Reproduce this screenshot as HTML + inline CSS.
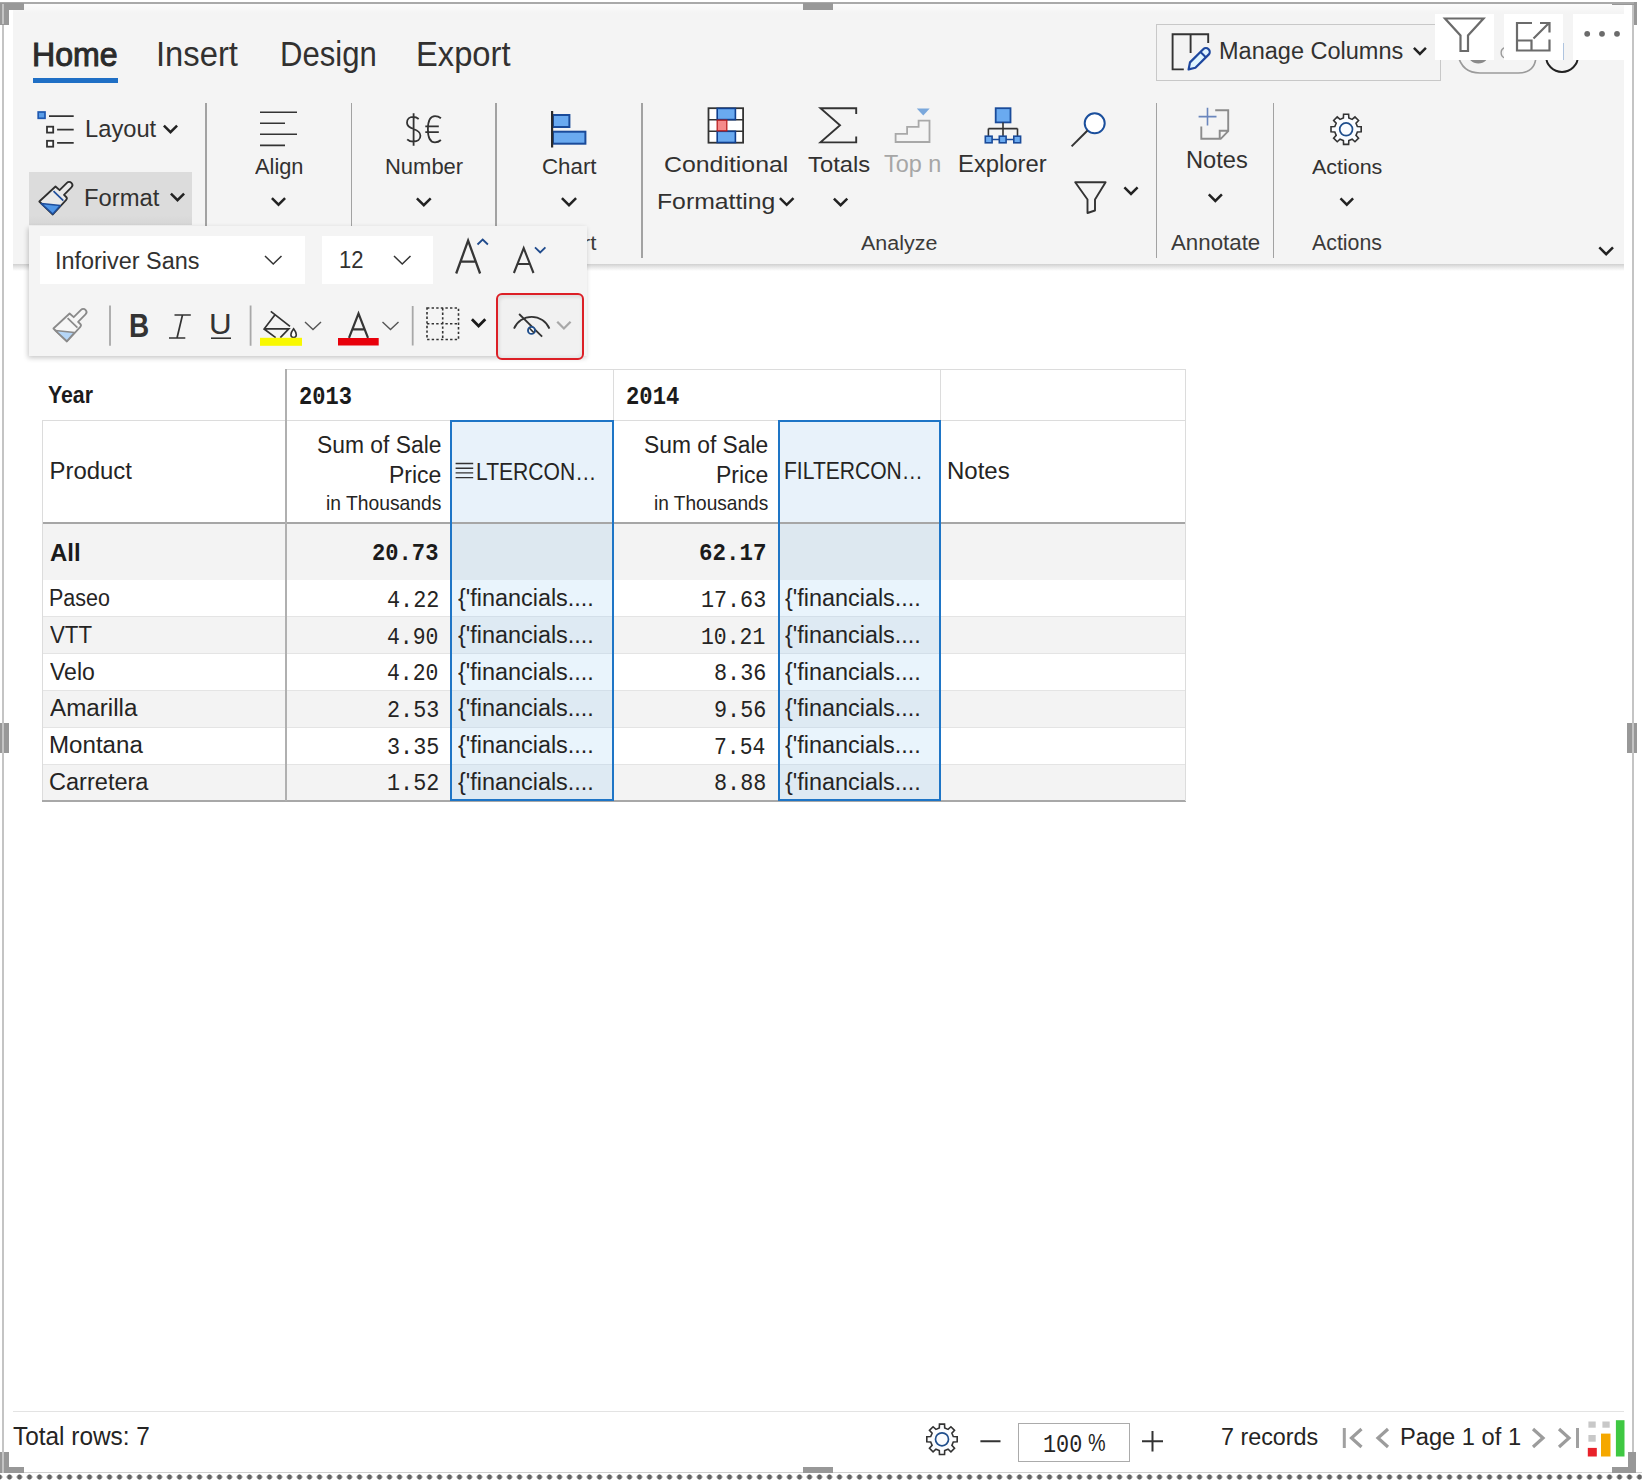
<!DOCTYPE html>
<html><head><meta charset="utf-8"><style>
html,body{margin:0;padding:0;background:#fff;}
body{width:1642px;height:1482px;overflow:hidden;position:relative;font-family:"Liberation Sans",sans-serif;}
.t{position:absolute;white-space:nowrap;line-height:1;transform-origin:0 0;z-index:3;}
.r{position:absolute;z-index:1;}
svg{position:absolute;overflow:visible;}
</style></head><body>
<div class="r" style="left:13px;top:4px;width:1611px;height:260px;background:linear-gradient(#fbfbfb 0px,#f4f4f4 9px,#f4f4f4 100%);"></div>
<div class="r" style="left:13px;top:264px;width:1611px;height:7px;background:linear-gradient(#d0d0d0 0px,#e6e6e6 3px,rgba(255,255,255,0) 7px);"></div>
<div class="r" style="left:33px;top:78px;width:85px;height:5px;background:#1f6fc5;"></div>
<div class="r" style="left:29px;top:172px;width:163px;height:53px;background:linear-gradient(#dcdcdc 0px,#dcdcdc 43px,#d6d6d6 53px);"></div>
<div class="r" style="left:205.3px;top:103px;width:1.6px;height:155px;background:#a2a2a2;"></div>
<div class="r" style="left:350.6px;top:103px;width:1.6px;height:155px;background:#a2a2a2;"></div>
<div class="r" style="left:495.4px;top:103px;width:1.6px;height:155px;background:#a2a2a2;"></div>
<div class="r" style="left:641px;top:103px;width:1.6px;height:155px;background:#a2a2a2;"></div>
<div class="r" style="left:1155.5px;top:103px;width:1.6px;height:155px;background:#a2a2a2;"></div>
<div class="r" style="left:1272.9px;top:103px;width:1.6px;height:155px;background:#a2a2a2;"></div>
<div class="r" style="left:1156px;top:23.5px;width:285px;height:57px;background:#f3f3f3;border:1px solid #c8c8c8;box-sizing:border-box;"></div>
<div class="r" style="left:1435px;top:13.5px;width:59px;height:46.5px;background:#fff;z-index:4;"></div>
<div class="r" style="left:1503.8px;top:13.5px;width:59px;height:46.5px;background:#fff;z-index:4;"></div>
<div class="r" style="left:1572.8px;top:13.5px;width:51px;height:46.5px;background:#fff;z-index:4;"></div>
<div class="r" style="left:29px;top:225.5px;width:558px;height:130.5px;background:#f4f4f4;z-index:10;box-shadow:-1px 2px 5px rgba(0,0,0,0.22);"></div>
<div class="r" style="left:40px;top:236px;width:265px;height:48.3px;background:#fff;z-index:11;"></div>
<div class="r" style="left:321.7px;top:236px;width:111.8px;height:48.3px;background:#fff;z-index:11;"></div>
<div class="r" style="left:495.5px;top:292.6px;width:88px;height:67px;background:#f1f1f1;z-index:11;border:2.2px solid #dc1f26;border-radius:6px;box-sizing:border-box;box-shadow:inset 3px 4px 3px -1px rgba(0,0,0,0.07), inset -2px -3px 3px -1px rgba(0,0,0,0.05);"></div>
<div class="r" style="left:42px;top:523px;width:1143.5px;height:57px;background:#f3f3f3;"></div>
<div class="r" style="left:42px;top:580.2px;width:1143.5px;height:36.19999999999993px;background:#ffffff;"></div>
<div class="r" style="left:42px;top:616.4px;width:1143.5px;height:36.80000000000007px;background:#f3f3f3;"></div>
<div class="r" style="left:42px;top:615.9px;width:1143.5px;height:1px;background:#e4e4e4;"></div>
<div class="r" style="left:42px;top:653.2px;width:1143.5px;height:36.799999999999955px;background:#ffffff;"></div>
<div class="r" style="left:42px;top:652.7px;width:1143.5px;height:1px;background:#e4e4e4;"></div>
<div class="r" style="left:42px;top:690.0px;width:1143.5px;height:37.0px;background:#f3f3f3;"></div>
<div class="r" style="left:42px;top:689.5px;width:1143.5px;height:1px;background:#e4e4e4;"></div>
<div class="r" style="left:42px;top:727.0px;width:1143.5px;height:37.0px;background:#ffffff;"></div>
<div class="r" style="left:42px;top:726.5px;width:1143.5px;height:1px;background:#e4e4e4;"></div>
<div class="r" style="left:42px;top:764.0px;width:1143.5px;height:36.39999999999998px;background:#f3f3f3;"></div>
<div class="r" style="left:42px;top:763.5px;width:1143.5px;height:1px;background:#e4e4e4;"></div>
<div class="r" style="left:450.3px;top:421px;width:162.5px;height:101.5px;background:#e8f2fa;"></div>
<div class="r" style="left:450.3px;top:523px;width:162.5px;height:57.2px;background:#dde8f0;"></div>
<div class="r" style="left:450.3px;top:580.2px;width:162.5px;height:36.19999999999993px;background:#e9f4fc;"></div>
<div class="r" style="left:450.3px;top:616.4px;width:162.5px;height:36.80000000000007px;background:#deeaf3;"></div>
<div class="r" style="left:450.3px;top:615.9px;width:162.5px;height:1px;background:#d3dfe9;"></div>
<div class="r" style="left:450.3px;top:653.2px;width:162.5px;height:36.799999999999955px;background:#e9f4fc;"></div>
<div class="r" style="left:450.3px;top:652.7px;width:162.5px;height:1px;background:#d3dfe9;"></div>
<div class="r" style="left:450.3px;top:690.0px;width:162.5px;height:37.0px;background:#deeaf3;"></div>
<div class="r" style="left:450.3px;top:689.5px;width:162.5px;height:1px;background:#d3dfe9;"></div>
<div class="r" style="left:450.3px;top:727.0px;width:162.5px;height:37.0px;background:#e9f4fc;"></div>
<div class="r" style="left:450.3px;top:726.5px;width:162.5px;height:1px;background:#d3dfe9;"></div>
<div class="r" style="left:450.3px;top:764.0px;width:162.5px;height:36.39999999999998px;background:#deeaf3;"></div>
<div class="r" style="left:450.3px;top:763.5px;width:162.5px;height:1px;background:#d3dfe9;"></div>
<div class="r" style="left:777.6px;top:421px;width:162.5px;height:101.5px;background:#e8f2fa;"></div>
<div class="r" style="left:777.6px;top:523px;width:162.5px;height:57.2px;background:#dde8f0;"></div>
<div class="r" style="left:777.6px;top:580.2px;width:162.5px;height:36.19999999999993px;background:#e9f4fc;"></div>
<div class="r" style="left:777.6px;top:616.4px;width:162.5px;height:36.80000000000007px;background:#deeaf3;"></div>
<div class="r" style="left:777.6px;top:615.9px;width:162.5px;height:1px;background:#d3dfe9;"></div>
<div class="r" style="left:777.6px;top:653.2px;width:162.5px;height:36.799999999999955px;background:#e9f4fc;"></div>
<div class="r" style="left:777.6px;top:652.7px;width:162.5px;height:1px;background:#d3dfe9;"></div>
<div class="r" style="left:777.6px;top:690.0px;width:162.5px;height:37.0px;background:#deeaf3;"></div>
<div class="r" style="left:777.6px;top:689.5px;width:162.5px;height:1px;background:#d3dfe9;"></div>
<div class="r" style="left:777.6px;top:727.0px;width:162.5px;height:37.0px;background:#e9f4fc;"></div>
<div class="r" style="left:777.6px;top:726.5px;width:162.5px;height:1px;background:#d3dfe9;"></div>
<div class="r" style="left:777.6px;top:764.0px;width:162.5px;height:36.39999999999998px;background:#deeaf3;"></div>
<div class="r" style="left:777.6px;top:763.5px;width:162.5px;height:1px;background:#d3dfe9;"></div>
<div class="r" style="left:286px;top:368.5px;width:899.5px;height:1px;background:#dcdcdc;"></div>
<div class="r" style="left:42px;top:420px;width:1143.5px;height:1px;background:#dcdcdc;"></div>
<div class="r" style="left:42px;top:521.5px;width:1143.5px;height:2px;background:#a6a6a6;"></div>
<div class="r" style="left:42px;top:799.5px;width:1143.5px;height:2px;background:#a8a8a8;"></div>
<div class="r" style="left:41.5px;top:421px;width:1px;height:379px;background:#dcdcdc;"></div>
<div class="r" style="left:1185px;top:368.5px;width:1px;height:432px;background:#dcdcdc;"></div>
<div class="r" style="left:285.2px;top:368.5px;width:1.4px;height:432px;background:#b0b0b0;"></div>
<div class="r" style="left:612.5px;top:368.5px;width:1px;height:52px;background:#dcdcdc;"></div>
<div class="r" style="left:939.8px;top:368.5px;width:1px;height:52px;background:#dcdcdc;"></div>
<div class="r" style="left:450.3px;top:420.2px;width:163.5px;height:381.0px;background:transparent;border:2px solid #1e75c6;box-sizing:border-box;height:381px;"></div>
<div class="r" style="left:777.6px;top:420.2px;width:163.5px;height:381.0px;background:transparent;border:2px solid #1e75c6;box-sizing:border-box;height:381px;"></div>
<div class="r" style="left:13px;top:1410.5px;width:1611px;height:1.5px;background:#e3e3e3;"></div>
<div class="r" style="left:1018.4px;top:1422.8px;width:111.5px;height:39.7px;background:#fff;border:1.5px solid #ababab;box-sizing:border-box;"></div>
<div class="r" style="left:0px;top:2px;width:1637px;height:2px;background:#a9a9a9;z-index:20;"></div>
<div class="r" style="left:2px;top:4px;width:2px;height:1469px;background:#c4c4c4;z-index:20;"></div>
<div class="r" style="left:1632px;top:4px;width:2px;height:1469px;background:#c4c4c4;z-index:20;"></div>
<div class="r" style="left:0px;top:1472px;width:1642px;height:1px;background:#d0d0d0;z-index:20;"></div>
<div class="r" style="left:0px;top:1473px;width:1642px;height:9px;background:#fff;z-index:20;"></div>
<div class="r" style="left:0;top:1471.5px;width:1642px;height:10px;z-index:21;background:radial-gradient(circle at 5px 5px,#656565 2.3px,rgba(101,101,101,0) 2.9px) 4.5px 0/10px 10px repeat-x;"></div>
<div class="r" style="left:0px;top:3px;width:9px;height:21.5px;background:#989898;z-index:22;"></div>
<div class="r" style="left:0px;top:3px;width:24px;height:6.5px;background:#989898;z-index:22;"></div>
<div class="r" style="left:803px;top:3px;width:30px;height:6.5px;background:#989898;z-index:22;"></div>
<div class="r" style="left:0px;top:723px;width:9px;height:30px;background:#989898;z-index:22;"></div>
<div class="r" style="left:1627px;top:723px;width:10px;height:30px;background:#989898;z-index:22;"></div>
<div class="r" style="left:0px;top:1452px;width:9px;height:21px;background:#989898;z-index:22;"></div>
<div class="r" style="left:0px;top:1467px;width:24px;height:6px;background:#989898;z-index:22;"></div>
<div class="r" style="left:1628px;top:1452px;width:8px;height:21px;background:#989898;z-index:22;"></div>
<div class="r" style="left:1612px;top:1467px;width:24px;height:6px;background:#989898;z-index:22;"></div>
<div class="r" style="left:1634px;top:2px;width:3px;height:22.7px;background:#989898;z-index:22;"></div>
<div class="r" style="left:1612px;top:3.5px;width:22px;height:1.5px;background:#989898;z-index:22;"></div>
<div class="r" style="left:803px;top:1467px;width:30px;height:6px;background:#989898;z-index:22;"></div>
<div class="r" style="left:2px;top:4px;width:2px;height:20px;background:#c4c4c4;z-index:23;"></div>
<div class="r" style="left:2px;top:723px;width:2px;height:30px;background:#c4c4c4;z-index:23;"></div>
<div class="r" style="left:2px;top:1452px;width:2px;height:21px;background:#c4c4c4;z-index:23;"></div>
<div class="r" style="left:1632px;top:723px;width:2px;height:30px;background:#c4c4c4;z-index:23;"></div>
<svg style="left:0;top:0;z-index:3" width="1642" height="1482" viewBox="0 0 1642 1482"><rect x="38.2" y="112" width="6.8" height="6.3" fill="#5b9ee8" stroke="#1f58b0" stroke-width="1.7"/><path d="M49,116.2H73.7M57.1,129.6H73.7M57.1,142.8H73.7" stroke="#333" stroke-width="1.7"/><rect x="47" y="126.7" width="6.2" height="5.9" fill="#fff" stroke="#333" stroke-width="1.8"/><rect x="47" y="140.8" width="6.2" height="5.9" fill="#fff" stroke="#333" stroke-width="1.8"/><path d="M163.90,125.62 L170.50,132.22 L177.10,125.62" fill="none" stroke="#222" stroke-width="2.5" stroke-linejoin="miter"/><g transform="translate(-14.1,-127)"><path d="M53.4,328.5 L69.6,313.5 L73.7,317.2 L81,309.9 A3.1,3.1 0 0 1 85.5,314.4 L78.1,321.8 L80.3,324 A2,2 0 0 1 80.3,326.8 L66.9,341.5 Z" fill="#e9e9e9" stroke="#2f2f2f" stroke-width="1.8" stroke-linejoin="round"/><path d="M55.4,330.6 L74.4,332.6 L66.9,341 Z" fill="#4f95e6" stroke="#1f4e9c" stroke-width="1.5" stroke-linejoin="round"/><path d="M67.6,318.2 L77.4,327.7" stroke="#1f4e9c" stroke-width="1.7"/></g><path d="M170.90,193.62 L177.50,200.22 L184.10,193.62" fill="none" stroke="#222" stroke-width="2.5" stroke-linejoin="miter"/><path d="M260,112.2H297M260,123.2H285M260,134.2H297M260,145.4H285" stroke="#333" stroke-width="1.6"/><path d="M271.90,198.12 L278.50,204.72 L285.10,198.12" fill="none" stroke="#222" stroke-width="2.5" stroke-linejoin="miter"/><path d="M416.90,198.32 L423.80,205.22 L430.70,198.32" fill="none" stroke="#222" stroke-width="2.5" stroke-linejoin="miter"/><rect x="553" y="115" width="16.4" height="12" fill="#6aaaf0" stroke="#1a4b9a" stroke-width="2"/><rect x="553" y="131.7" width="32.4" height="12" fill="#6aaaf0" stroke="#1a4b9a" stroke-width="2"/><path d="M552.1,111V147.5" stroke="#2b2b2b" stroke-width="2.2"/><path d="M561.90,198.12 L569.00,205.22 L576.10,198.12" fill="none" stroke="#222" stroke-width="2.5" stroke-linejoin="miter"/><rect x="708.5" y="108.2" width="34.6" height="34.5" fill="#fff" stroke="#333" stroke-width="1.8"/><path d="M708.5,119.8H743.1M708.5,131.2H743.1" stroke="#333" stroke-width="1.6"/><rect x="717.2" y="108.4" width="18.2" height="11.2" fill="#6aaaf0" stroke="#0f3f8f" stroke-width="1.6"/><rect x="717.2" y="131.3" width="18.2" height="11.2" fill="#6aaaf0" stroke="#0f3f8f" stroke-width="1.6"/><rect x="717.2" y="120.2" width="9.6" height="10.6" fill="#f58a8a" stroke="#b82020" stroke-width="1.3"/><path d="M779.90,198.03 L786.70,204.82 L793.50,198.03" fill="none" stroke="#222" stroke-width="2.5" stroke-linejoin="miter"/><path d="M856.2,114 V108.2 H820.5 L840,125.3 L820.5,142.4 H856.2 V136.5" fill="none" stroke="#333" stroke-width="1.9" stroke-linejoin="miter"/><path d="M833.90,198.52 L840.60,205.22 L847.30,198.52" fill="none" stroke="#222" stroke-width="2.5" stroke-linejoin="miter"/><path d="M916.8,108.4 H929.7 L923.25,115.6 Z" fill="#7aa8dc"/><path d="M895.6,142 V133.9 H907.1 V126.8 H918.6 V120.6 H929.5 V142 Z" fill="none" stroke="#a8a8a8" stroke-width="1.8"/><rect x="995.7" y="108.2" width="14.8" height="14.2" fill="#6aaaf0" stroke="#1a4b9a" stroke-width="1.8"/><path d="M1003,122.4V128.6M988.4,128.6H1017.5M988.4,128.6V136M1003,128.6V136M1017.5,128.6V136" fill="none" stroke="#333" stroke-width="1.6"/><path d="M992,139.5H999M1006,139.5H1013.5" stroke="#1a4b9a" stroke-width="1.6"/><rect x="985.3" y="136.2" width="6.8" height="6.6" fill="#6aaaf0" stroke="#1a4b9a" stroke-width="1.6"/><rect x="999.3" y="136.2" width="6.8" height="6.6" fill="#6aaaf0" stroke="#1a4b9a" stroke-width="1.6"/><rect x="1013.8" y="136.2" width="6.8" height="6.6" fill="#6aaaf0" stroke="#1a4b9a" stroke-width="1.6"/><circle cx="1094.7" cy="123.3" r="10" fill="#fff" stroke="#1b4f9c" stroke-width="2"/><path d="M1087.5,130.5 L1071.6,146.4" stroke="#333" stroke-width="2"/><path d="M1075.2,182.2 H1105.6 L1095,199.5 V210.5 L1087.5,213 V199.5 Z" fill="none" stroke="#333" stroke-width="1.9" stroke-linejoin="round"/><path d="M1124.40,187.32 L1131.00,193.92 L1137.60,187.32" fill="none" stroke="#222" stroke-width="2.5" stroke-linejoin="miter"/><path d="M1207.5,107.7V125.6M1198.6,116.6H1216.5" stroke="#6a86bd" stroke-width="1.6"/><path d="M1215.2,110.2H1228.2V131.1L1220.7,138.8H1201.3V126.4M1219.7,138V130.7H1228.2" fill="none" stroke="#8c8c8c" stroke-width="1.9"/><path d="M1208.80,194.38 L1215.35,200.92 L1221.90,194.38" fill="none" stroke="#222" stroke-width="2.5" stroke-linejoin="miter"/><path d="M1343.39,118.02 L1343.57,114.21 L1348.63,114.21 L1348.81,118.02 L1352.16,119.41 L1354.98,116.84 L1358.56,120.42 L1355.99,123.24 L1357.38,126.59 L1361.19,126.77 L1361.19,131.83 L1357.38,132.01 L1355.99,135.36 L1358.56,138.18 L1354.98,141.76 L1352.16,139.19 L1348.81,140.58 L1348.63,144.39 L1343.57,144.39 L1343.39,140.58 L1340.04,139.19 L1337.22,141.76 L1333.64,138.18 L1336.21,135.36 L1334.82,132.01 L1331.01,131.83 L1331.01,126.77 L1334.82,126.59 L1336.21,123.24 L1333.64,120.42 L1337.22,116.84 L1340.04,119.41Z" fill="#fafcff" stroke="#333" stroke-width="1.6" stroke-linejoin="miter"/><circle cx="1346.1" cy="129.3" r="6.4" fill="none" stroke="#1f4e8c" stroke-width="1.7"/><path d="M1340.50,198.42 L1346.80,204.72 L1353.10,198.42" fill="none" stroke="#222" stroke-width="2.5" stroke-linejoin="miter"/><path d="M1599.30,247.28 L1606.15,254.12 L1613.00,247.28" fill="none" stroke="#222" stroke-width="2.5" stroke-linejoin="miter"/><path d="M1183.8,69.4H1172.6V34.2H1208.2V43M1190.6,34.2V53" fill="none" stroke="#333" stroke-width="1.9"/><path d="M1188.6,69.4 L1190,62.4 L1203.2,49.2 A3.6,3.6 0 0 1 1208.6,54.6 L1195.4,67.8 Z" fill="#dff5ff" stroke="#1d479e" stroke-width="2.2" stroke-linejoin="round"/><path d="M1200.5,52 L1205.8,57.3" stroke="#1d479e" stroke-width="2"/><path d="M1413.90,47.93 L1419.90,53.93 L1425.90,47.93" fill="none" stroke="#222" stroke-width="2.5" stroke-linejoin="miter"/><path d="M413.6,113.2V145.7M418.7,119C417,117.5 415,116.8 413,116.8C409.5,116.8 407,119.3 407,122.7C407,126.2 409.8,127.7 413.6,129C417.5,130.3 420.4,132.2 420.4,135.8C420.4,139.3 417.5,141.6 413.4,141.6C410.8,141.6 408.6,140.7 407.2,139.3M440.9,118.3C439.3,116.9 437.3,116.1 435,116.1C430.8,116.1 427.9,120.4 427.9,129.2C427.9,138 430.8,142.3 435,142.3C437.3,142.3 439.4,141.4 440.9,140M425.3,126.4H438.8M425.3,132.2H438.8" fill="none" stroke="#333" stroke-width="1.8"/></svg>
<svg style="left:0;top:0;z-index:3" width="1642" height="1482" viewBox="0 0 1642 1482"><path d="M1458,55 Q1462,73 1480,73 H1518 Q1536,73 1536,55" fill="none" stroke="#9a9a9a" stroke-width="1.6"/><path d="M1546,56 A16,16 0 0 0 1578,56" fill="none" stroke="#222" stroke-width="2"/><circle cx="1478.3" cy="52.5" r="11" fill="#8a8a8a"/><path d="M1505,47.5 A5.5,5.5 0 0 0 1505,58" fill="none" stroke="#9a9a9a" stroke-width="1.4"/><path d="M1563,43V60" stroke="#4a7fc0" stroke-width="0.8"/></svg>
<svg style="left:0;top:0;z-index:5" width="1642" height="1482" viewBox="0 0 1642 1482"><path d="M1445,18.5 H1483.5 L1468,35.5 V51 H1460.5 V35.5 Z" fill="none" stroke="#6b6b6b" stroke-width="2.2" stroke-linejoin="miter"/><path d="M1532,23 H1517 V50.5 H1549.5 V39.5 M1517,40.5 H1531.5 V50.5 M1533.5,38.5 L1549,23 M1540,23 H1549.5 V32.5" fill="none" stroke="#6b6b6b" stroke-width="2.2"/><circle cx="1587.2" cy="33.8" r="2.9" fill="#6b6b6b"/><circle cx="1602" cy="33.8" r="2.9" fill="#6b6b6b"/><circle cx="1617" cy="33.8" r="2.9" fill="#6b6b6b"/></svg>
<svg style="left:0;top:0;z-index:12" width="1642" height="1482" viewBox="0 0 1642 1482"><path d="M265,256 L273.25,264 L281.5,256" fill="none" stroke="#333" stroke-width="1.5" stroke-linecap="butt" stroke-linejoin="miter"/><path d="M394,256 L402.25,264 L410.5,256" fill="none" stroke="#333" stroke-width="1.5" stroke-linecap="butt" stroke-linejoin="miter"/><path d="M456.2,273.5 L468.1,240.6 L480.1,273.5 M461.2,261.6 H475" fill="none" stroke="#363636" stroke-width="2.3" stroke-linejoin="miter"/><path d="M513.9,273 L523.7,248.2 L533.5,273 M517.6,264 H529.8" fill="none" stroke="#363636" stroke-width="2.1" stroke-linejoin="miter"/><path d="M349,337.8 L358.5,313.5 L368,337.8 M352.3,329.3 H364.7" fill="none" stroke="#363636" stroke-width="2.2" stroke-linejoin="miter"/><path d="M477.5,244.5 L482.7,239.5 L487.9,244.5" fill="none" stroke="#1f4a8c" stroke-width="1.8"/><path d="M535,247.3 L540.2,252.5 L545.4,247.3" fill="none" stroke="#1f4a8c" stroke-width="1.8"/><path d="M53.4,328.5 L69.6,313.5 L73.7,317.2 L81,309.9 A3.1,3.1 0 0 1 85.5,314.4 L78.1,321.8 L80.3,324 A2,2 0 0 1 80.3,326.8 L66.9,341.5 Z" fill="#f6f6f6" stroke="#8a8a8a" stroke-width="1.8" stroke-linejoin="round"/><path d="M55.4,330.6 L74.4,332.6 L66.9,341 Z" fill="#b5d6f7" stroke="#8a8a8a" stroke-width="1.5" stroke-linejoin="round"/><path d="M67.6,318.2 L77.4,327.7" stroke="#8a8a8a" stroke-width="1.7"/><path d="M110,305.5V345.7M250.6,305.5V345.7M412.7,306V345.5" stroke="#a8a8a8" stroke-width="1.8"/><path d="M174.5,315H190.8M169,338H185.3M182.5,315L177,338" stroke="#333" stroke-width="1.7"/><path d="M211,338.2H231" stroke="#333" stroke-width="1.6"/><path d="M270.8,311.4 L290,326.3 M274.8,315 L264.1,329 L275.7,337.6 M264.1,328.8 H288.8 L280.3,337.6" fill="none" stroke="#333" stroke-width="1.7"/><path d="M293.6,328.8 C295.3,331 296.3,333.3 296.3,334.8 A2.7,2.7 0 0 1 290.9,334.8 C290.9,333.3 291.9,331 293.6,328.8Z" fill="#fff" stroke="#333" stroke-width="1.6"/><rect x="260" y="337.8" width="42" height="8" fill="#f8f800"/><path d="M305,322 L313.0,329.5 L321,322" fill="none" stroke="#555" stroke-width="1.4" stroke-linecap="butt" stroke-linejoin="miter"/><rect x="338" y="338" width="40.7" height="7.5" fill="#e8000b"/><path d="M382.5,322 L390.5,329.5 L398.5,322" fill="none" stroke="#555" stroke-width="1.4" stroke-linecap="butt" stroke-linejoin="miter"/><path d="M427,308 H458.5 V339.5 H427 Z M442.7,308 V339.5 M427,323.7 H458.5" fill="none" stroke="#333" stroke-width="1.6" stroke-dasharray="2.4,2.2"/><path d="M471.91,319.32 L478.60,326.01 L485.29,319.32" fill="none" stroke="#1a1a1a" stroke-width="2.8" stroke-linejoin="miter"/><path d="M514,328.6 A19.2,19.2 0 0 1 549.4,328.6" fill="none" stroke="#333" stroke-width="1.8"/><path d="M519.1,314 L542.1,336.7" stroke="#333" stroke-width="1.8"/><circle cx="531.5" cy="330.4" r="3.5" fill="#f6f8fb" stroke="#1f4e8c" stroke-width="1.9"/><path d="M529.5,328.3 L533.8,332.6" stroke="#333" stroke-width="1.6"/><path d="M557.23,321.80 L563.90,328.47 L570.57,321.80" fill="none" stroke="#a8a8a8" stroke-width="2.3" stroke-linejoin="miter"/></svg>
<svg style="left:0;top:0;z-index:3" width="1642" height="1482" viewBox="0 0 1642 1482"><path d="M455.6,463.5H473.2M455.6,468.2H473.2M455.6,472.9H473.2M455.6,477.6H473.2" stroke="#333" stroke-width="1.4"/></svg>
<svg style="left:0;top:0;z-index:3" width="1642" height="1482" viewBox="0 0 1642 1482"><path d="M939.29,1428.02 L939.46,1424.11 L944.54,1424.11 L944.71,1428.02 L948.06,1429.41 L950.94,1426.76 L954.54,1430.36 L951.89,1433.24 L953.28,1436.59 L957.19,1436.76 L957.19,1441.84 L953.28,1442.01 L951.89,1445.36 L954.54,1448.24 L950.94,1451.84 L948.06,1449.19 L944.71,1450.58 L944.54,1454.49 L939.46,1454.49 L939.29,1450.58 L935.94,1449.19 L933.06,1451.84 L929.46,1448.24 L932.11,1445.36 L930.72,1442.01 L926.81,1441.84 L926.81,1436.76 L930.72,1436.59 L932.11,1433.24 L929.46,1430.36 L933.06,1426.76 L935.94,1429.41Z" fill="#fbfcfe" stroke="#333" stroke-width="1.6" stroke-linejoin="miter"/><circle cx="942" cy="1439.3" r="6.5" fill="none" stroke="#1f4e8c" stroke-width="1.7"/><path d="M980.4,1441.2H1000.5M1142,1441.2H1163M1152.5,1431V1451.5" stroke="#333" stroke-width="2"/><path d="M1344.3,1428V1448" stroke="#a0a0a0" stroke-width="3"/><path d="M1361.5,1429 L1351.5,1438 L1361.5,1447 M1388,1429 L1378,1438 L1388,1447 M1533,1429 L1543,1438 L1533,1447 M1559,1429 L1569,1438 L1559,1447" fill="none" stroke="#9c9c9c" stroke-width="3.2"/><path d="M1577.5,1428V1448" stroke="#a0a0a0" stroke-width="3"/><rect x="1588.4" y="1421.5" width="7.3" height="6.2" fill="#c8c8c8"/><rect x="1602.4" y="1421.5" width="7.3" height="6.2" fill="#c8c8c8"/><rect x="1588.4" y="1435" width="7.3" height="6.7" fill="#c8c8c8"/><rect x="1587.8" y="1447.9" width="9" height="8.6" fill="#e8222a"/><rect x="1601" y="1433.6" width="9.5" height="22.9" fill="#f5a800"/><rect x="1615.9" y="1420.2" width="8.6" height="36.3" fill="#3fc842"/></svg>

<div class="t" style="left:31.86px;top:37.89px;font-size:33.19px;color:#2b2b2b;z-index:2;-webkit-text-stroke:1.0px #2b2b2b;transform:scaleX(0.9678);">Home</div>
<div class="t" style="left:156.14px;top:37.30px;font-size:34.35px;color:#323130;z-index:2;transform:scaleX(0.9542);">Insert</div>
<div class="t" style="left:280.19px;top:37.30px;font-size:34.35px;color:#323130;z-index:2;transform:scaleX(0.9050);">Design</div>
<div class="t" style="left:416.10px;top:37.30px;font-size:34.35px;color:#323130;z-index:2;transform:scaleX(0.9521);">Export</div>
<div class="t" style="left:85.38px;top:116.93px;font-size:24.78px;color:#323130;z-index:2;transform:scaleX(0.9575);">Layout</div>
<div class="t" style="left:83.99px;top:186.84px;font-size:23.48px;color:#323130;z-index:2;transform:scaleX(1.0135);">Format</div>
<div class="t" style="left:255.00px;top:156.59px;font-size:21.30px;color:#323130;z-index:2;transform:scaleX(1.0234);">Align</div>
<div class="t" style="left:384.77px;top:156.89px;font-size:21.30px;color:#323130;z-index:2;transform:scaleX(1.0314);">Number</div>
<div class="t" style="left:541.65px;top:156.89px;font-size:21.30px;color:#323130;z-index:2;transform:scaleX(1.0477);">Chart</div>
<div class="t" style="left:541.63px;top:232.98px;font-size:20.72px;color:#3b3a39;z-index:2;transform:scaleX(1.0740);">Chart</div>
<div class="t" style="left:664.21px;top:153.14px;font-size:22.90px;color:#323130;z-index:2;transform:scaleX(1.0857);">Conditional</div>
<div class="t" style="left:657.12px;top:189.54px;font-size:22.90px;color:#323130;z-index:2;transform:scaleX(1.0817);">Formatting</div>
<div class="t" style="left:807.90px;top:153.14px;font-size:22.90px;color:#323130;z-index:2;transform:scaleX(1.0402);">Totals</div>
<div class="t" style="left:883.80px;top:153.11px;font-size:23.04px;color:#a6a6a6;z-index:2;transform:scaleX(1.0174);">Top n</div>
<div class="t" style="left:958.17px;top:153.11px;font-size:23.04px;color:#323130;z-index:2;transform:scaleX(1.0342);">Explorer</div>
<div class="t" style="left:861.00px;top:233.01px;font-size:20.58px;color:#3b3a39;z-index:2;transform:scaleX(1.0424);">Analyze</div>
<div class="t" style="left:1186.28px;top:149.49px;font-size:23.19px;color:#323130;z-index:2;transform:scaleX(1.0196);">Notes</div>
<div class="t" style="left:1171.00px;top:231.88px;font-size:22.03px;color:#3b3a39;z-index:2;transform:scaleX(1.0126);">Annotate</div>
<div class="t" style="left:1312.20px;top:157.01px;font-size:20.58px;color:#323130;z-index:2;transform:scaleX(1.0425);">Actions</div>
<div class="t" style="left:1312.20px;top:231.88px;font-size:22.03px;color:#3b3a39;z-index:2;transform:scaleX(0.9697);">Actions</div>
<div class="t" style="left:1219.28px;top:40.11px;font-size:23.04px;color:#323130;z-index:2;transform:scaleX(1.0207);">Manage Columns</div>
<div class="t" style="left:54.54px;top:248.67px;font-size:23.91px;color:#323130;z-index:12;transform:scaleX(0.9791);">Inforiver Sans</div>
<div class="t" style="left:338.59px;top:248.13px;font-size:24.20px;color:#323130;z-index:12;transform:scaleX(0.9115);">12</div>
<div class="t" style="left:128.84px;top:308.60px;font-size:33.77px;font-weight:bold;color:#333;z-index:12;transform:scaleX(0.8286);">B</div>
<div class="t" style="left:209.39px;top:309.25px;font-size:29.71px;color:#333;z-index:12;transform:scaleX(1.0556);">U</div>
<div class="t" style="left:48.30px;top:382.67px;font-size:23.91px;font-weight:bold;color:#1b1b1b;transform:scaleX(0.8901);">Year</div>
<div class="t" style="left:298.71px;top:384.82px;font-size:24.85px;font-family:'Liberation Mono';font-weight:bold;color:#1b1b1b;transform:scaleX(0.8874);">2013</div>
<div class="t" style="left:625.82px;top:384.78px;font-size:25.15px;font-family:'Liberation Mono';font-weight:bold;color:#1b1b1b;transform:scaleX(0.8825);">2014</div>
<div class="t" style="left:49.50px;top:459.37px;font-size:23.91px;color:#252423;">Product</div>
<div class="t" style="left:317.44px;top:432.50px;font-size:23.77px;color:#252423;transform:scaleX(0.9613);">Sum of Sale</div>
<div class="t" style="left:389.43px;top:463.00px;font-size:23.77px;color:#252423;transform:scaleX(0.9678);">Price</div>
<div class="t" style="left:326.34px;top:493.18px;font-size:20.14px;color:#252423;transform:scaleX(0.9577);">in Thousands</div>
<div class="t" style="left:644.44px;top:432.50px;font-size:23.77px;color:#252423;transform:scaleX(0.9597);">Sum of Sale</div>
<div class="t" style="left:716.23px;top:463.00px;font-size:23.77px;color:#252423;transform:scaleX(0.9678);">Price</div>
<div class="t" style="left:653.85px;top:493.18px;font-size:20.14px;color:#252423;transform:scaleX(0.9485);">in Thousands</div>
<div class="t" style="left:476.01px;top:459.80px;font-size:23.77px;color:#252423;transform:scaleX(0.8875);">LTERCON…</div>
<div class="t" style="left:784.40px;top:459.67px;font-size:23.33px;color:#252423;transform:scaleX(0.9032);">FILTERCON…</div>
<div class="t" style="left:946.97px;top:459.67px;font-size:23.33px;color:#252423;transform:scaleX(1.0291);">Notes</div>
<div class="t" style="left:49.80px;top:540.50px;font-size:24.35px;font-weight:bold;color:#1b1b1b;transform:scaleX(0.9826);">All</div>
<div class="t" style="left:371.79px;top:542.38px;font-size:24.24px;font-family:'Liberation Mono';font-weight:bold;color:#1b1b1b;transform:scaleX(0.9133);">20.73</div>
<div class="t" style="left:698.77px;top:542.38px;font-size:24.24px;font-family:'Liberation Mono';font-weight:bold;color:#1b1b1b;transform:scaleX(0.9263);">62.17</div>
<div class="t" style="left:49.08px;top:587.34px;font-size:23.48px;color:#252423;transform:scaleX(0.9161);">Paseo</div>
<div class="t" style="left:386.80px;top:588.88px;font-size:24.24px;font-family:'Liberation Mono';color:#252423;transform:scaleX(0.8988);">4.22</div>
<div class="t" style="left:700.90px;top:588.88px;font-size:24.24px;font-family:'Liberation Mono';color:#252423;transform:scaleX(0.8964);">17.63</div>
<div class="t" style="left:458.00px;top:587.34px;font-size:23.48px;color:#252423;transform:scaleX(0.9969);">{'financials....</div>
<div class="t" style="left:785.00px;top:587.34px;font-size:23.48px;color:#252423;transform:scaleX(0.9969);">{'financials....</div>
<div class="t" style="left:50.00px;top:624.04px;font-size:23.48px;color:#252423;transform:scaleX(0.9480);">VTT</div>
<div class="t" style="left:386.82px;top:625.58px;font-size:24.24px;font-family:'Liberation Mono';color:#252423;transform:scaleX(0.8829);">4.90</div>
<div class="t" style="left:700.92px;top:625.58px;font-size:24.24px;font-family:'Liberation Mono';color:#252423;transform:scaleX(0.8838);">10.21</div>
<div class="t" style="left:458.00px;top:624.04px;font-size:23.48px;color:#252423;transform:scaleX(0.9969);">{'financials....</div>
<div class="t" style="left:785.00px;top:624.04px;font-size:23.48px;color:#252423;transform:scaleX(0.9969);">{'financials....</div>
<div class="t" style="left:50.00px;top:660.74px;font-size:23.48px;color:#252423;transform:scaleX(0.9819);">Velo</div>
<div class="t" style="left:386.82px;top:662.28px;font-size:24.24px;font-family:'Liberation Mono';color:#252423;transform:scaleX(0.8829);">4.20</div>
<div class="t" style="left:713.80px;top:662.28px;font-size:24.24px;font-family:'Liberation Mono';color:#252423;transform:scaleX(0.8988);">8.36</div>
<div class="t" style="left:458.00px;top:660.74px;font-size:23.48px;color:#252423;transform:scaleX(0.9969);">{'financials....</div>
<div class="t" style="left:785.00px;top:660.74px;font-size:23.48px;color:#252423;transform:scaleX(0.9969);">{'financials....</div>
<div class="t" style="left:50.00px;top:697.44px;font-size:23.48px;color:#252423;transform:scaleX(1.0302);">Amarilla</div>
<div class="t" style="left:386.80px;top:698.98px;font-size:24.24px;font-family:'Liberation Mono';color:#252423;transform:scaleX(0.8988);">2.53</div>
<div class="t" style="left:713.80px;top:698.98px;font-size:24.24px;font-family:'Liberation Mono';color:#252423;transform:scaleX(0.8988);">9.56</div>
<div class="t" style="left:458.00px;top:697.44px;font-size:23.48px;color:#252423;transform:scaleX(0.9969);">{'financials....</div>
<div class="t" style="left:785.00px;top:697.44px;font-size:23.48px;color:#252423;transform:scaleX(0.9969);">{'financials....</div>
<div class="t" style="left:48.97px;top:734.14px;font-size:23.48px;color:#252423;transform:scaleX(1.0276);">Montana</div>
<div class="t" style="left:386.80px;top:735.68px;font-size:24.24px;font-family:'Liberation Mono';color:#252423;transform:scaleX(0.8988);">3.35</div>
<div class="t" style="left:713.82px;top:735.68px;font-size:24.24px;font-family:'Liberation Mono';color:#252423;transform:scaleX(0.8829);">7.54</div>
<div class="t" style="left:458.00px;top:734.14px;font-size:23.48px;color:#252423;transform:scaleX(0.9969);">{'financials....</div>
<div class="t" style="left:785.00px;top:734.14px;font-size:23.48px;color:#252423;transform:scaleX(0.9969);">{'financials....</div>
<div class="t" style="left:49.00px;top:770.84px;font-size:23.48px;color:#252423;transform:scaleX(1.0033);">Carretera</div>
<div class="t" style="left:386.80px;top:772.38px;font-size:24.24px;font-family:'Liberation Mono';color:#252423;transform:scaleX(0.8988);">1.52</div>
<div class="t" style="left:713.80px;top:772.38px;font-size:24.24px;font-family:'Liberation Mono';color:#252423;transform:scaleX(0.8988);">8.88</div>
<div class="t" style="left:458.00px;top:770.84px;font-size:23.48px;color:#252423;transform:scaleX(0.9969);">{'financials....</div>
<div class="t" style="left:785.00px;top:770.84px;font-size:23.48px;color:#252423;transform:scaleX(0.9969);">{'financials....</div>
<div class="t" style="left:12.50px;top:1424.44px;font-size:25.36px;color:#252423;transform:scaleX(0.9614);">Total rows: 7</div>
<div class="t" style="left:1043.43px;top:1432.50px;font-size:25.00px;font-family:'Liberation Mono';color:#252423;transform:scaleX(0.8720);">100</div>
<div class="t" style="left:1088.20px;top:1431.17px;font-size:23.91px;color:#252423;transform:scaleX(0.8286);">%</div>
<div class="t" style="left:1220.51px;top:1425.84px;font-size:23.48px;color:#252423;transform:scaleX(0.9938);">7 records</div>
<div class="t" style="left:1400.29px;top:1425.84px;font-size:23.48px;color:#252423;transform:scaleX(1.0085);">Page 1 of 1</div>
</body></html>
